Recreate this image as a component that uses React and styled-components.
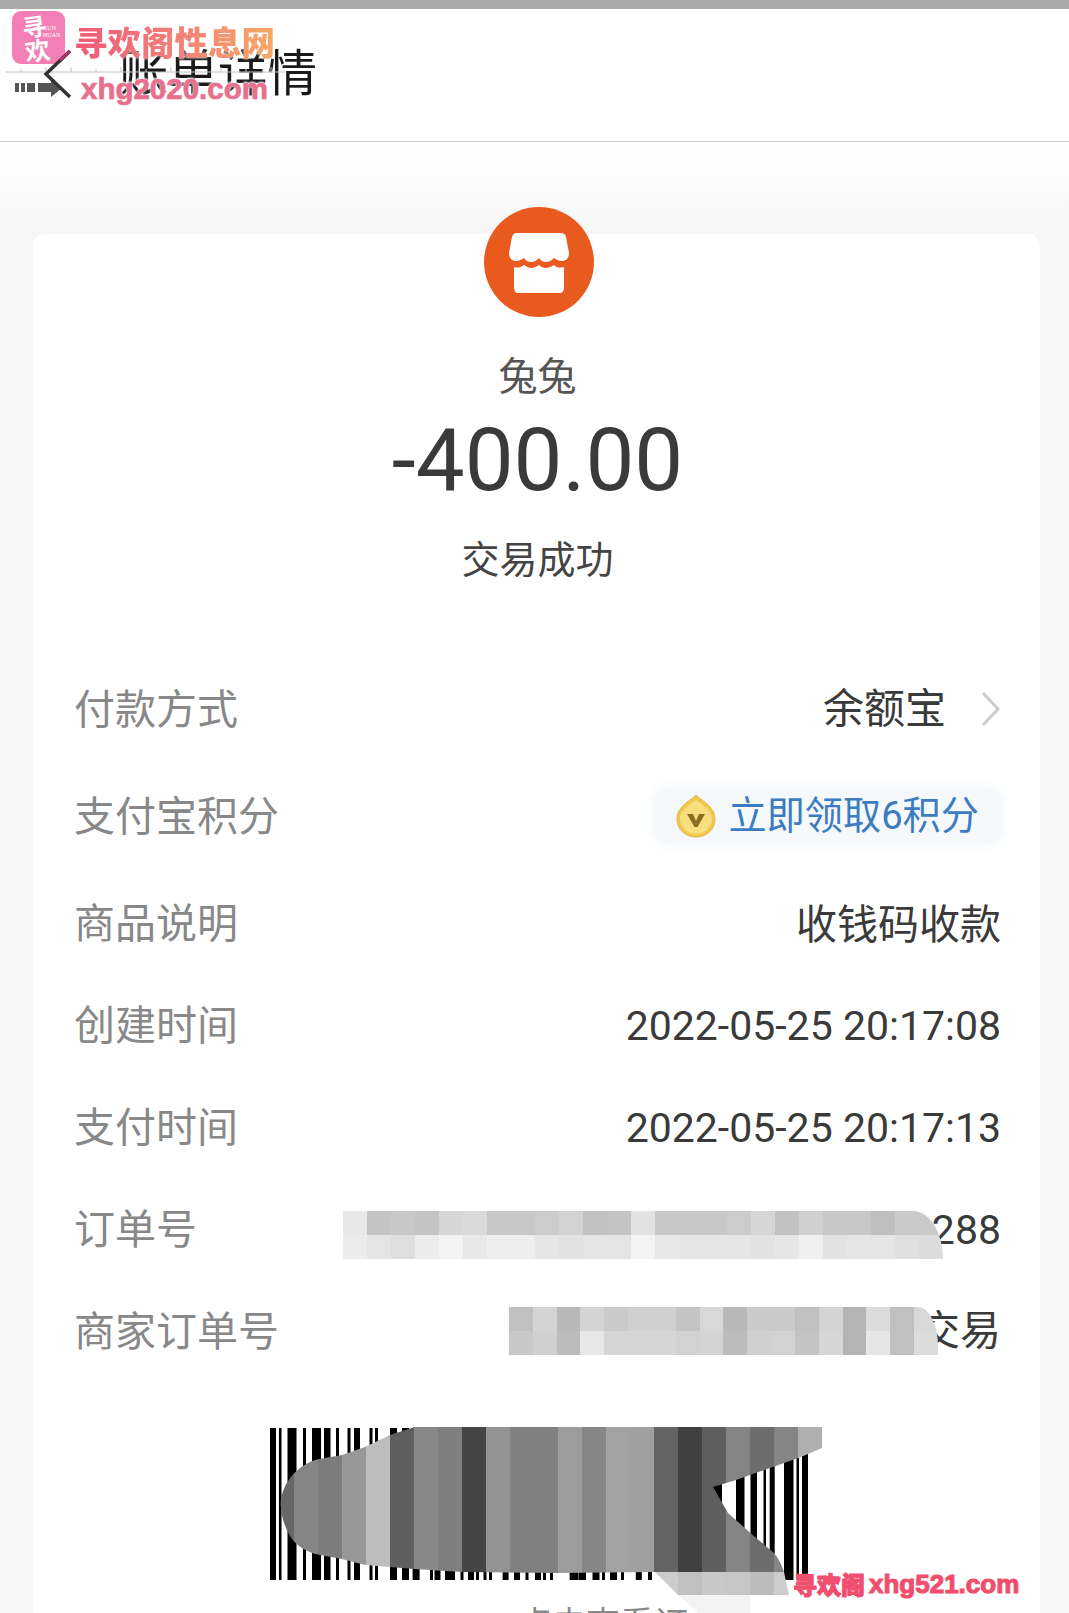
import React from "react";
import styled, { createGlobalStyle } from "styled-components";

const Global = createGlobalStyle`
  html, body { margin: 0; padding: 0; background: #fff; }
  body { font-family: "Noto Sans CJK SC", Roboto, sans-serif; }
  * { box-sizing: border-box; }
`;

const Page = styled.div`
  position: relative;
  width: 1069px;
  height: 1613px;
  overflow: hidden;
  background: #fff;
`;
const StatusStrip = styled.div`
  height: 9px;
  background: #aaaaaa;
`;
const Header = styled.header`
  display: flex;
  align-items: center;
  height: 133px;
  padding: 0 0 0 119px;
  background: #fff;
  border-bottom: 1px solid #cfcfcf;
`;
const BackMark = styled.svg`
  position: absolute;
  left: 5px;
  top: 49px;
  z-index: 4;
`;
const Title = styled.h1`
  margin: 0 0 10px;
  font: 400 49.5px/1 "Noto Sans CJK SC", sans-serif;
  color: #1a1a1a;
`;
const Body = styled.main`
  height: 1471px;
  padding: 92px 29px 0 33px;
  background: linear-gradient(#ffffff 0, #f6f6f6 92px);
`;
const Card = styled.section`
  display: flow-root;
  height: 1500px;
  padding: 0 39px 0 41px;
  background: #fff;
  border-radius: 12px;
`;
const Hero = styled.div`
  display: flex;
  flex-direction: column;
  align-items: center;
  margin-top: -27px;
  height: 451px;
`;
const Shop = styled.div`
  width: 110px;
  height: 110px;
  border-radius: 50%;
  background: #e95a1f;
  margin-left: 2px;
`;
const Payee = styled.div`
  margin-top: 31px;
  font: 400 39px/50px "Noto Sans CJK SC", sans-serif;
  color: #555;
`;
const Amount = styled.div`
  margin-top: 12px;
  font: 400 87px/100px Roboto, sans-serif;
  color: #3a3a3a;
`;
const Status = styled.div`
  margin-top: 22px;
  font: 400 38px/50px "Noto Sans CJK SC", sans-serif;
  color: #444;
`;
const Row = styled.div`
  position: relative;
  display: flex;
  align-items: center;
  justify-content: space-between;
  height: 102px;
  margin-bottom: ${(p) => (p.$tall ? "5px" : "0")};
`;
const Label = styled.span`
  padding-bottom: 6px;
  font: 400 41px/1 "Noto Sans CJK SC", sans-serif;
  color: #888;
`;
const Value = styled.span`
  padding-top: ${(p) => p.$drop ?? 2}px;
  font: 400 41px/1 Roboto, "Noto Sans CJK SC", sans-serif;
  color: #3a3a3a;
`;
const ValueLink = styled.span`
  display: flex;
  align-items: center;
  gap: 35px;
`;
const Pill = styled.span`
  display: flex;
  align-items: center;
  gap: 12px;
  height: 56px;
  padding: 0 22px;
  border-radius: 14px;
  background: #f5f9fc;
  box-shadow: 0 0 9px 3px #f5f9fc;
  font: 400 38.2px/1 Roboto, "Noto Sans CJK SC", sans-serif;
  color: #3c7cc2;
`;
const Mosaic = styled.div`
  position: absolute;
  top: ${(p) => p.$top}px;
  right: ${(p) => p.$right}px;
  display: grid;
  grid-template-columns: repeat(${(p) => p.$cols}, ${(p) => p.$cell}px);
  grid-auto-rows: 24px;
  overflow: hidden;
  border-top-right-radius: ${(p) => p.$corner};
`;
const Cell = styled.span`
  display: block;
`;
const BarcodeBlock = styled.div`
  margin-top: 46px;
  padding-left: 195px;
  height: 152px;
`;
const Barcode = styled.svg`
  display: block;
  overflow: visible;
  position: relative;
  z-index: 1;
`;
const Hint = styled.div`
  margin-top: 22px;
  padding-left: 444px;
  font: 400 34px/40px "Noto Sans CJK SC", sans-serif;
  color: #888;
  white-space: nowrap;
`;
const LogoBadge = styled.div`
  position: absolute;
  left: 12px;
  top: 11px;
  width: 53px;
  height: 53px;
  border-radius: 9px;
  background: #f47fb6;
  color: #fff;
  z-index: 3;
`;
const LogoGlyph = styled.span`
  position: absolute;
  left: ${(p) => p.$x}px;
  top: ${(p) => p.$y}px;
  font: 700 ${(p) => p.$size}px/1 "Noto Sans CJK SC", sans-serif;
  transform: rotate(-8deg);
`;
const LogoLatin = styled.span`
  position: absolute;
  left: 31px;
  top: ${(p) => p.$y}px;
  font: 400 6px/1 "Liberation Serif", serif;
`;
const WatermarkName = styled.div`
  position: absolute;
  left: 74px;
  top: 22px;
  font: 900 33.5px/38px "Noto Sans CJK SC", sans-serif;
  white-space: nowrap;
  background: linear-gradient(90deg, #ef5a78 0%, #f27f78 50%, #f8a865 100%);
  -webkit-background-clip: text;
  background-clip: text;
  color: transparent;
  filter: drop-shadow(0 0 1.5px #fff);
  z-index: 3;
`;
const WatermarkSite = styled.div`
  position: absolute;
  left: 81px;
  top: 72px;
  font: 700 29.5px/34px "Liberation Sans", sans-serif;
  color: #e9708d;
  -webkit-text-stroke: 0.7px #e9708d;
  text-shadow: 0 0 2px #fff, 0 0 3px #fff, 0 -1px 2px #fff;
  z-index: 3;
`;
const WatermarkFoot = styled.div`
  position: absolute;
  left: 793px;
  top: 1568px;
  display: flex;
  align-items: center;
  gap: 4px;
  font: 700 26px/32px "Liberation Sans", "Noto Sans CJK SC", sans-serif;
  color: #f04e6e;
  -webkit-text-stroke: 1.1px #f04e6e;
  text-shadow: 0 0 2px #fff;
  z-index: 3;
`;
const FootCjk = styled.span`
  font: 900 24px/32px "Noto Sans CJK SC", sans-serif;
`;

const ROW_A = ["#e8e8e8","#c4c4c4","#c8c8c8","#c4c4c4","#d6d6d6","#dadada","#c8c8c8","#c8c8c8","#cccccc","#d2d2d2","#c2c2c2","#c4c4c4","#e2e2e2","#c8c8c8","#c8c8c8","#c8c8c8","#cccccc","#d6d6d6","#c2c2c2","#d0d0d0","#c8c8c8","#c8c8c8","#bfbfbf","#cacaca","#cacaca"];
const ROW_B = ["#ececec","#e4e4e4","#dedede","#ececec","#f3f3f3","#e8e8e8","#eeeeee","#eeeeee","#e6e6e6","#e2e2e2","#e4e4e4","#e4e4e4","#f4f4f4","#e8e8e8","#e6e6e6","#e6e6e6","#e6e6e6","#e2e2e2","#e6e6e6","#efefef","#e2e2e2","#e6e6e6","#e4e4e4","#e0e0e0","#dcdcdc"];
const ROW_C = ["#c0c0c0","#d4d4d4","#b8b8b8","#d4d4d4","#cacaca","#d0d0d0","#d0d0d0","#c4c4c4","#d8d8d8","#b8b8b8","#cacaca","#cacaca","#c0c0c0","#d4d4d4","#b4b4b4","#dcdcdc","#c0c0c0","#d8d8d8"];
const ROW_D = ["#c8c8c8","#d0d0d0","#bcbcbc","#e8e8e8","#d6d6d6","#d6d6d6","#d6d6d6","#d2d2d2","#d4d4d4","#bcbcbc","#d0d0d0","#d2d2d2","#c4c4c4","#d6d6d6","#b4b4b4","#e6e6e6","#c0c0c0","#dcdcdc"];

const BARS = [[270,6],[279,2.5],[287.5,9],[303,3],[312,9],[324,6.5],[336,3],[347.5,3],[354,6],[369.5,3],[375,3],[390,7],[402,7],[412.6,7],[430,3],[434.5,6],[445,7],[452,3],[460.5,3],[468,6],[476,3],[483.5,3],[489,3],[502.6,6],[514,6],[525.5,3],[535,6],[543,3],[550,3],[569.6,9],[579,7],[592.5,7],[602,3],[610,7],[621,3],[635.8,6],[648,4],[713,9],[736,8.5],[750.5,6.5],[763.5,2.5],[769.7,5],[784,9.5],[796.5,2.5],[802,6]];
const COLS = ["#676767","#858585","#7d7d7d","#989898","#bdbdbd","#5f5f5f","#888888","#7f7f7f","#444444","#939393","#808080","#808080","#9c9c9c","#868686","#a2a2a2","#a0a0a0","#646464","#404040","#5f5f5f","#848484","#6d6d6d","#858585","#b0b0b0"];
const BAND = [["#cccccc",654],["#c0c0c0",678],["#c8c8c8",702],["#c6c6c6",726],["#bcbcbc",750],["#cccccc",774]];
const SMEAR = "M414.6 1427 L390 1435 L365 1447 L342 1455 C328 1458 318 1458 308 1463 C294 1470 282 1485 280.6 1503 C281 1515 284 1526 290 1536 C296 1546 306 1551 315 1554 L342 1559 L365 1565 L414.6 1569 L462 1572 L556 1573 L656 1572 L784 1572 C781 1563 778 1558 774 1553 L755 1537 L728 1513 L713 1487 L736 1480 L770 1468 L801 1457 L822 1448 L822 1427 Z";
const BANDCLIP = "M655 1572 L678 1595 L789 1595 L784 1572 Z";

function Store() {
  return (
    <Shop>
      <svg width="110" height="110" viewBox="0 0 110 110">
        <path fill="#fff" d="M33 26 H77 C80 26 81 27 82 30 L85 46 C85 51 82 54 78 54 C75 54 73 53 70 51 C67 54 64 55 62 55 C59 55 57 54 55 51 C52 54 50 55 47 55 C45 55 42 54 40 51 C37 53 35 54 32 54 C28 54 25 51 25 46 L28 30 C29 27 30 26 33 26 Z" />
        <path fill="#fff" d="M30 60 C33 61 36 61 40 58 C43 60 45 61 47 61 C50 61 52 60 55 58 C57 60 59 61 62 61 C64 61 67 60 70 58 C73 61 76 61 80 60 V81 C80 84 78 86 76 86 H34 C32 86 30 84 30 81 Z" />
      </svg>
    </Shop>
  );
}

function Coin() {
  return (
    <svg width="40" height="44" viewBox="0 0 40 44">
      <path fill="#f2c648" stroke="#e8b53a" strokeWidth="1" d="M20 1 C24 6 39 12 39 25 C39 36 30 43 20 43 C10 43 1 36 1 25 C1 12 16 6 20 1 Z" />
      <path fill="#f9de80" d="M20 5 C24 10 36 15 36 25 C36 34 28 40 20 40 C12 40 4 34 4 25 C4 15 16 10 20 5 Z" />
      <path fill="#8d6e1f" d="M11 20 H17 L20 27 L23 20 H29 L21.5 33 H18.5 Z" />
    </svg>
  );
}

function Chevron() {
  return (
    <svg width="20" height="36" viewBox="0 0 20 36">
      <path d="M2 2 L17 18 L2 34" fill="none" stroke="#cccccc" strokeWidth="3" />
    </svg>
  );
}

export default function App() {
  return (
    <Page>
      <Global />
      <StatusStrip />
      <Header>
        <Title>账单详情</Title>
      </Header>
      <BackMark width="282" height="52" viewBox="5 49 282 52">
        <path d="M5 72 H285" stroke="#c4c4c4" strokeWidth="1" />
        <path d="M21 69 V72 M46 67 V72 M71 67 V72 M96 69 V72 M121 67 V72 M146 69 V72 M171 67 V72 M196 69 V72 M221 67 V72 M246 69 V72 M271 67 V72" stroke="#c4c4c4" strokeWidth="1" />
        <path fill="#555" d="M15 83 H19 V92 H15 Z M21 83 H25 V92 H21 Z M27 83 H35 V92 H27 Z M38 83 H51 V79 L62 88 L51 97 V92 H38 Z" />
        <path d="M70 51 L46 74 L70 97" fill="none" stroke="#333" strokeWidth="3.5" />
        <path d="M70 51 L60 60.6" fill="none" stroke="#a0386a" strokeWidth="3.5" />
      </BackMark>
      <Body>
        <Card>
          <Hero>
            <Store />
            <Payee>兔兔</Payee>
            <Amount>-400.00</Amount>
            <Status>交易成功</Status>
          </Hero>
          <Row $tall>
            <Label>付款方式</Label>
            <ValueLink>
              <Value $drop={0}>余额宝</Value>
              <Chevron />
            </ValueLink>
          </Row>
          <Row $tall>
            <Label>支付宝积分</Label>
            <Pill>
              <Coin />
              立即领取6积分
            </Pill>
          </Row>
          <Row>
            <Label>商品说明</Label>
            <Value $drop={4}>收钱码收款</Value>
          </Row>
          <Row>
            <Label>创建时间</Label>
            <Value>2022-05-25 20:17:08</Value>
          </Row>
          <Row>
            <Label>支付时间</Label>
            <Value>2022-05-25 20:17:13</Value>
          </Row>
          <Row>
            <Label>订单号</Label>
            <Value>2288</Value>
            <Mosaic $top={33} $cols={25} $cell={24} $right={58} $corner="30px 48px">
              {[...ROW_A, ...ROW_B].map((c, i) => (
                <Cell key={i} style={{ background: c }} />
              ))}
            </Mosaic>
          </Row>
          <Row>
            <Label>商家订单号</Label>
            <Value $drop={0}>交易</Value>
            <Mosaic $top={27} $cols={18} $cell={23.85} $right={63} $corner="20px 40px">
              {[...ROW_C, ...ROW_D].map((c, i) => (
                <Cell key={i} style={{ background: c }} />
              ))}
            </Mosaic>
          </Row>
          <BarcodeBlock>
            <Barcode width="553" height="152" viewBox="269 1428 553 152">
              <defs>
                <clipPath id="smear"><path d={SMEAR} /></clipPath>
                <clipPath id="band"><path d={BANDCLIP} /></clipPath>
              </defs>
              {BARS.map(([x, w]) => (
                <rect key={x} x={x} y="1428" width={w} height="152" fill="#000" />
              ))}
              <g clipPath="url(#smear)">
                {COLS.map((c, i) => (
                  <rect key={i} x={270 + i * 24} y="1427" width="24.5" height="150" fill={c} />
                ))}
              </g>
              <g clipPath="url(#band)">
                {BAND.map(([c, x]) => (
                  <rect key={x} x={x} y="1572" width="24.5" height="24" fill={c} />
                ))}
              </g>
              <path d="M678 1595 L699 1613 H750 V1595 Z" fill="#f3f3f3" />
            </Barcode>
          </BarcodeBlock>
          <Hint>点击查看订单</Hint>
        </Card>
      </Body>
      <LogoBadge>
        <LogoGlyph $x={10} $y={3} $size={24}>寻</LogoGlyph>
        <LogoGlyph $x={13} $y={26} $size={25}>欢</LogoGlyph>
        <LogoLatin $y={14}>XUN</LogoLatin>
        <LogoLatin $y={21}>HUAN</LogoLatin>
      </LogoBadge>
      <WatermarkName>寻欢阁性息网</WatermarkName>
      <WatermarkSite>xhg2020.com</WatermarkSite>
      <WatermarkFoot>
        <FootCjk>寻欢阁</FootCjk>
        xhg521.com
      </WatermarkFoot>
    </Page>
  );
}
